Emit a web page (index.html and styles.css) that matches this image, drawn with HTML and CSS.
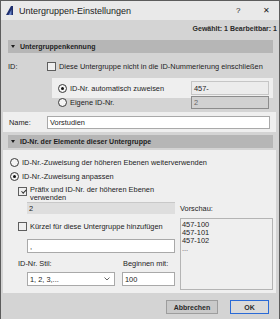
FILE: index.html
```html
<!DOCTYPE html>
<html lang="de">
<head>
    <meta charset="UTF-8">
    <title>Untergruppen-Einstellungen</title>
    <link rel="stylesheet" href="styles.css">
</head>
<body>

<div class="dialog">
    <div class="titlebar">
        <svg class="app-icon" width="9" height="11" viewBox="0 0 9 11">
            <path d="M1 10 L6 1 L8 1 L8 10 Z" fill="#1f2f6e"/>
            <path d="M3.5 10 L6.5 4.5 L6.5 10 Z" fill="#6b86c8"/>
        </svg>
        <span class="title">Untergruppen-Einstellungen</span>
        <span class="tb-help">?</span>
        <span class="tb-close">&#x2715;</span>
    </div>

    <div class="body">
        <div class="status">Gewählt: 1 Bearbeitbar: 1</div>

        <!-- Untergruppenkennung -->
        <div class="section-head"><span class="caret"></span>Untergruppenkennung</div>

        <div class="id-row">
            <span class="lbl-id">ID:</span>
            <span class="check"></span>
            <span>Diese Untergruppe nicht in die ID-Nummerierung einschließen</span>
        </div>

        <div class="auto-row">
            <span class="radio on"></span>
            <span class="auto-text">ID-Nr. automatisch zuweisen</span>
            <div class="field field-soft">457-</div>
        </div>
        <div class="own-row">
            <span class="radio"></span>
            <span class="auto-text">Eigene ID-Nr.</span>
            <div class="field field-off">2</div>
        </div>

        <div class="name-row">
            <span class="lbl-name">Name:</span>
            <div class="field field-white name-field">Vorstudien</div>
        </div>

        <!-- ID-Nr. der Elemente -->
        <div class="section-head"><span class="caret"></span>ID-Nr. der Elemente dieser Untergruppe</div>

        <div class="elements">
            <div class="opt-row">
                <span class="radio"></span>
                <span>ID-Nr.-Zuweisung der höheren Ebenen weiterverwenden</span>
            </div>
            <div class="opt-row">
                <span class="radio on"></span>
                <span>ID-Nr.-Zuweisung anpassen</span>
            </div>

            <div class="custom">
                <div class="left-col">
                    <div class="chk-row two-line">
                        <span class="check on"></span>
                        <span>Präfix und ID-Nr. der höheren Ebenen<br>verwenden</span>
                    </div>
                    <div class="field field-flat prefix-field">2</div>
                    <div class="chk-row">
                        <span class="check"></span>
                        <span>Kürzel für diese Untergruppe hinzufügen</span>
                    </div>
                    <div class="field field-white short-field">,</div>
                    <div class="style-row">
                        <div class="style-col">
                            <div class="small-lbl">ID-Nr. Stil:</div>
                            <div class="field field-white select">
                                <span>1, 2, 3,...</span>
                                <svg width="6" height="4" viewBox="0 0 6 4"><path d="M0.5 0.5 L3 3 L5.5 0.5" fill="none" stroke="#555" stroke-width="0.9"/></svg>
                            </div>
                        </div>
                        <div class="start-col">
                            <div class="small-lbl">Beginnen mit:</div>
                            <div class="field field-white start-field">100</div>
                        </div>
                    </div>
                </div>
                <div class="right-col">
                    <div class="small-lbl">Vorschau:</div>
                    <div class="preview">
                        <div>457-100</div>
                        <div>457-101</div>
                        <div>457-102</div>
                        <div class="more">...</div>
                    </div>
                </div>
            </div>
        </div>

        <div class="footer">
            <button class="btn">Abbrechen</button>
            <button class="btn btn-ok">OK</button>
        </div>
    </div>
</div>

</body>
</html>
```

FILE: styles.css
```css
body {
    margin: 0;
    background-color: #d4d4d4;
    font-family: "Liberation Sans", Arial, sans-serif;
    font-size: 7.4px;
    color: #1c1c1c;
}
.dialog {
    width: 278px;
    height: 318px;
    border: 1px solid #5c5c5c;
    border-bottom: none;
    background-color: #d4d4d4;
    display: flex;
    flex-direction: column;
}
.titlebar {
    height: 19px;
    background-color: #e9e9e9;
    display: flex;
    align-items: center;
    padding-left: 4px;
}
.app-icon {
    margin-right: 5px;
}
.title {
    font-size: 9px;
    color: #222;
    flex: 1;
}
.tb-help {
    font-size: 8px;
    width: 27px;
}
.tb-close {
    font-size: 8px;
    width: 16px;
}
.body {
    flex: 1;
    display: flex;
    flex-direction: column;
}
.status {
    text-align: right;
    font-weight: bold;
    font-size: 7px;
    padding: 5px 2px 0 0;
    height: 12px;
    color: #2a2a2a;
}
.section-head {
    margin: 3px 6px 0 7px;
    height: 13px;
    background-color: #b6b6b6;
    font-weight: bold;
    font-size: 7px;
    display: flex;
    align-items: center;
    color: #1e1e1e;
}
.caret {
    width: 0;
    height: 0;
    border-left: 2px solid transparent;
    border-right: 2px solid transparent;
    border-top: 3px solid #1e1e1e;
    margin: 0 5px 0 3px;
}
.id-row {
    display: flex;
    align-items: center;
    height: 12px;
    margin-top: 7px;
    padding-left: 7px;
}
.lbl-id {
    width: 39px;
}
.check {
    width: 7px;
    height: 7px;
    border: 1px solid #5e5e5e;
    background-color: #efefef;
    margin-right: 3px;
    flex-shrink: 0;
    position: relative;
}
.check.on::after {
    content: "";
    position: absolute;
    left: 1px;
    top: 0;
    width: 4px;
    height: 2px;
    border-left: 1px solid #333;
    border-bottom: 1px solid #333;
    transform: rotate(-45deg) translate(0, 2px);
}
.radio {
    width: 7px;
    height: 7px;
    border: 1px solid #3a3a3a;
    border-radius: 50%;
    background-color: #f4f4f4;
    margin-right: 3px;
    flex-shrink: 0;
    position: relative;
}
.radio.on::after {
    content: "";
    position: absolute;
    left: 2px;
    top: 2px;
    width: 3px;
    height: 3px;
    border-radius: 50%;
    background-color: #111;
}
.auto-row {
    margin: 6px 6px 0 51px;
    height: 20px;
    background-color: #efefef;
    display: flex;
    align-items: center;
    padding-left: 6px;
}
.auto-text {
    flex: 1;
}
.own-row {
    margin: -2px 6px 0 51px;
    height: 13px;
    display: flex;
    align-items: center;
    padding-left: 6px;
}
.field {
    box-sizing: border-box;
    height: 14px;
    padding-left: 2px;
    display: flex;
    align-items: center;
}
.auto-row .field, .own-row .field {
    width: 78px;
    margin-right: 4px;
}
.field-soft {
    background-color: #ececec;
    border: 1px solid #c6c6c6;
}
.field-off {
    height: 13px;
    background-color: #d1d1d1;
    border: 1px solid #8c8c8c;
    color: #666;
}
.field-white {
    background-color: #ffffff;
    border: 1px solid #a9a9a9;
}
.field-flat {
    background-color: #dedede;
    border-top: 1px solid #c8c8c8;
}
.name-row {
    margin: 3px 3px 0 2px;
    height: 20px;
    background-color: #efefef;
    display: flex;
    align-items: center;
    padding-left: 6px;
}
.lbl-name {
    width: 38px;
}
.name-field {
    width: 223px;
    height: 13px;
}
.elements {
    margin: 2px 3px 0 2px;
    height: 143px;
    background-color: #efefef;
    padding-left: 7px;
    box-sizing: border-box;
    padding-top: 5px;
}
.opt-row {
    display: flex;
    align-items: center;
    height: 14px;
}
.custom {
    display: flex;
    align-items: flex-start;
    padding-left: 8px;
    margin-top: 3px;
}
.left-col {
    width: 158px;
}
.chk-row {
    display: flex;
    align-items: center;
    height: 14px;
}
.chk-row.two-line {
    align-items: flex-start;
    height: 16px;
    line-height: 8px;
}
.chk-row.two-line .check {
    margin-top: 1px;
}
.prefix-field {
    margin: 0 0 5px 9px;
    width: 148px;
    height: 12px;
}
.short-field {
    margin: 6px 0 0 9px;
    width: 148px;
}
.style-row {
    display: flex;
    margin-top: 6px;
}
.small-lbl {
    height: 10px;
    line-height: 10px;
}
.style-col {
    width: 104px;
}
.select {
    margin: 3px 0 0 9px;
    width: 88px;
    justify-content: space-between;
    padding-right: 4px;
}
.start-col .small-lbl {
    padding-left: 1px;
}
.start-field {
    margin-top: 3px;
    width: 53px;
}
.right-col {
    margin-top: 18px;
    margin-left: 4px;
    flex: 1;
}
.preview {
    margin-top: 4px;
    width: 93px;
    height: 72px;
    box-sizing: border-box;
    border: 1px solid #b4b4b4;
    padding: 2px 1px;
    line-height: 8px;
}
.more {
    color: #555;
}
.footer {
    display: flex;
    justify-content: flex-end;
    padding: 7px 10px 0 0;
    gap: 12px;
}
.btn {
    font-family: "Liberation Sans", Arial, sans-serif;
    font-size: 7px;
    font-weight: bold;
    color: #2a2a2a;
    height: 14px;
    background-color: #c9c9c9;
    border: 1px solid #9d9d9d;
    padding: 0;
    width: 52px;
}
.btn-ok {
    width: 39px;
    background-color: #dadada;
    border: 1px solid #2a6ad6;
}
```
